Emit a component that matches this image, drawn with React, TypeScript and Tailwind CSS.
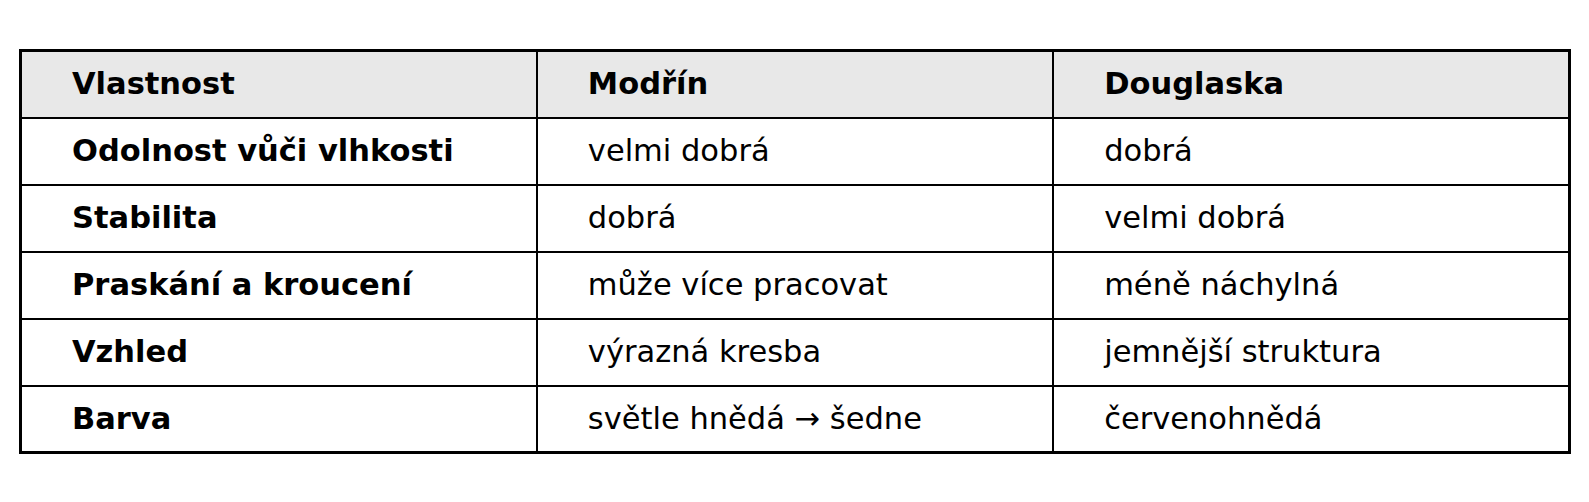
const rows = [
  ["Odolnost vůči vlhkosti", "velmi dobrá", "dobrá"],
  ["Stabilita", "dobrá", "velmi dobrá"],
  ["Praskání a kroucení", "může více pracovat", "méně náchylná"],
  ["Vzhled", "výrazná kresba", "jemnější struktura"],
  ["Barva", "světle hnědá → šedne", "červenohnědá"],
];

export default function App() {
  return (
    <div
      className="bg-white w-[1589px] h-[502px] pt-[49px] pl-[19px] text-black"
      style={{ fontFamily: "'DejaVu Sans', sans-serif" }}
    >
      <table className="w-[1552px] table-fixed border-collapse border-[3px] border-black text-[30.5px]">
        <thead>
          <tr className="bg-[#e8e8e8]">
            {["Vlastnost", "Modřín", "Douglaska"].map((h) => (
              <th
                key={h}
                className="h-[67px] border-2 border-black pl-[50px] p-0 text-left font-bold leading-none"
              >
                {h}
              </th>
            ))}
          </tr>
        </thead>
        <tbody>
          {rows.map((r) => (
            <tr key={r[0]}>
              <td className="h-[67px] border-2 border-black pl-[50px] font-bold leading-none">
                {r[0]}
              </td>
              <td className="h-[67px] border-2 border-black pl-[50px] leading-none">
                {r[1]}
              </td>
              <td className="h-[67px] border-2 border-black pl-[50px] leading-none">
                {r[2]}
              </td>
            </tr>
          ))}
        </tbody>
      </table>
    </div>
  );
}
